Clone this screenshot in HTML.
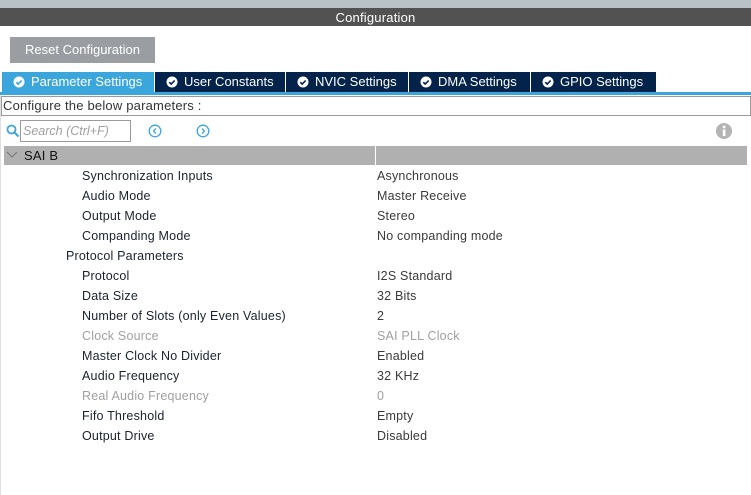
<!DOCTYPE html>
<html><head><meta charset="utf-8"><style>
*{margin:0;padding:0;box-sizing:border-box}
body{width:751px;height:495px;background:#fff;font-family:"Liberation Sans",Arial,sans-serif;font-size:12.5px;position:relative;overflow:hidden}
.a{position:absolute}
.tab{position:absolute;top:72px;height:20px;background:#03234b;color:#fff;font-size:13px;line-height:20px;white-space:nowrap}
.tab svg{position:absolute;left:11px;top:4px}
.tab span{position:absolute;left:29px}
.r{position:absolute;height:20px;line-height:20px;white-space:nowrap;letter-spacing:0.2px}
.l{color:#1a2230}
.v{color:#3a3a3a;left:377px}
.d{color:#a0a0a0}
</style></head><body>
<div class="a" style="left:0;top:0;width:751px;height:8px;background:#b9c2c6"></div>
<div class="a" style="left:0;top:8px;width:751px;height:18px;background:#525252;color:#fff;text-align:center;line-height:19px;font-size:13px;letter-spacing:0.2px">Configuration</div>
<div class="a" style="left:10px;top:37px;width:145px;height:26px;background:#9a9ea2;color:#fff;text-align:center;line-height:26px;font-size:13px">Reset Configuration</div>

<div class="tab" style="left:2px;width:152px;background:#3ba6dc"><svg width="12" height="12"><circle cx="6" cy="6" r="5.5" fill="#fff"/><path d="M3.3 6.2l1.9 1.9 3.5-3.6" stroke="#3ba6dc" stroke-width="1.6" fill="none"/></svg><span>Parameter Settings</span></div>
<div class="tab" style="left:155px;width:130px"><svg width="12" height="12"><circle cx="6" cy="6" r="5.5" fill="#fff"/><path d="M3.3 6.2l1.9 1.9 3.5-3.6" stroke="#03234b" stroke-width="1.6" fill="none"/></svg><span>User Constants</span></div>
<div class="tab" style="left:286px;width:122px"><svg width="12" height="12"><circle cx="6" cy="6" r="5.5" fill="#fff"/><path d="M3.3 6.2l1.9 1.9 3.5-3.6" stroke="#03234b" stroke-width="1.6" fill="none"/></svg><span>NVIC Settings</span></div>
<div class="tab" style="left:409px;width:121px"><svg width="12" height="12"><circle cx="6" cy="6" r="5.5" fill="#fff"/><path d="M3.3 6.2l1.9 1.9 3.5-3.6" stroke="#03234b" stroke-width="1.6" fill="none"/></svg><span>DMA Settings</span></div>
<div class="tab" style="left:531px;width:125px"><svg width="12" height="12"><circle cx="6" cy="6" r="5.5" fill="#fff"/><path d="M3.3 6.2l1.9 1.9 3.5-3.6" stroke="#03234b" stroke-width="1.6" fill="none"/></svg><span>GPIO Settings</span></div>
<div class="a" style="left:0;top:92px;width:751px;height:3px;background:#3ba6dc"></div>

<div class="a" style="left:0;top:95px;width:1px;height:400px;background:#e0e0e0"></div>
<div class="a" style="left:1px;top:96px;width:750px;height:20px;border:1px solid #9a9a9a;line-height:18px;padding-left:1px;color:#333;font-size:13px;letter-spacing:0.2px">Configure the below parameters :</div>

<svg class="a" style="left:6px;top:124px" width="14" height="14"><circle cx="5.5" cy="5.5" r="4" stroke="#3ba6dc" stroke-width="1.8" fill="none"/><path d="M8.5 8.5l4 4" stroke="#3ba6dc" stroke-width="2"/></svg>
<div class="a" style="left:20px;top:120px;width:111px;height:22px;border:1px solid #9a9a9a;color:#a0a0a0;font-style:italic;line-height:20px;padding-left:2px;font-size:12.5px">Search (Ctrl+F)</div>
<svg class="a" style="left:148px;top:124px" width="14" height="14"><circle cx="7" cy="7" r="5.8" stroke="#3ba6dc" stroke-width="1.3" fill="none"/><path d="M8 4.5l-2.5 2.5 2.5 2.5" stroke="#3ba6dc" stroke-width="1.3" fill="none"/></svg>
<svg class="a" style="left:196px;top:124px" width="14" height="14"><circle cx="7" cy="7" r="5.8" stroke="#3ba6dc" stroke-width="1.3" fill="none"/><path d="M6 4.5l2.5 2.5-2.5 2.5" stroke="#3ba6dc" stroke-width="1.3" fill="none"/></svg>
<svg class="a" style="left:715px;top:122px" width="18" height="18"><circle cx="9" cy="9" r="8" fill="#b4b4b4"/><rect x="7.8" y="7.5" width="2.6" height="6.5" fill="#fff"/><circle cx="9.1" cy="5" r="1.4" fill="#fff"/></svg>

<div class="a" style="left:4px;top:146px;width:743px;height:19px;background:#b0b0b0"></div>
<div class="a" style="left:375px;top:146px;width:1px;height:19px;background:#fff"></div>
<svg class="a" style="left:6px;top:151px" width="12" height="8"><path d="M1 1l5 5 5-5" stroke="#777" stroke-width="1" fill="none"/></svg>
<div class="r l" style="left:24px;top:146px;font-size:13px;color:#111">SAI B</div>

<div class="r l" style="left:82px;top:166px">Synchronization Inputs</div><div class="r v" style="top:166px">Asynchronous</div>
<div class="r l" style="left:82px;top:186px">Audio Mode</div><div class="r v" style="top:186px">Master Receive</div>
<div class="r l" style="left:82px;top:206px">Output Mode</div><div class="r v" style="top:206px">Stereo</div>
<div class="r l" style="left:82px;top:226px">Companding Mode</div><div class="r v" style="top:226px">No companding mode</div>
<div class="r l" style="left:66px;top:246px">Protocol Parameters</div>
<div class="r l" style="left:82px;top:266px">Protocol</div><div class="r v" style="top:266px">I2S Standard</div>
<div class="r l" style="left:82px;top:286px">Data Size</div><div class="r v" style="top:286px">32 Bits</div>
<div class="r l" style="left:82px;top:306px">Number of Slots (only Even Values)</div><div class="r v" style="top:306px">2</div>
<div class="r d" style="left:82px;top:326px">Clock Source</div><div class="r v d" style="top:326px">SAI PLL Clock</div>
<div class="r l" style="left:82px;top:346px">Master Clock No Divider</div><div class="r v" style="top:346px">Enabled</div>
<div class="r l" style="left:82px;top:366px">Audio Frequency</div><div class="r v" style="top:366px">32 KHz</div>
<div class="r d" style="left:82px;top:386px">Real Audio Frequency</div><div class="r v d" style="top:386px">0</div>
<div class="r l" style="left:82px;top:406px">Fifo Threshold</div><div class="r v" style="top:406px">Empty</div>
<div class="r l" style="left:82px;top:426px">Output Drive</div><div class="r v" style="top:426px">Disabled</div>
</body></html>
